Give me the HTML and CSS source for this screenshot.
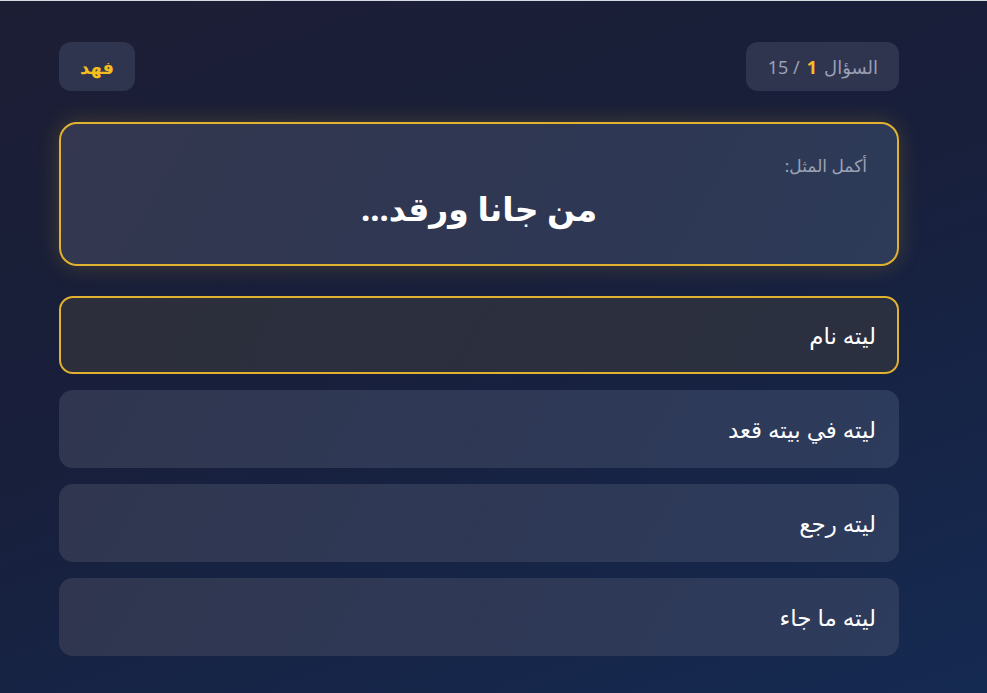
FILE: index.html
```html
<!DOCTYPE html>
<html lang="ar" dir="rtl">
<head>
<meta charset="utf-8">
<title>أكمل المثل</title>
<link rel="stylesheet" href="styles.css">
</head>
<body>
<div class="page">
  <header class="topbar">
    <div class="pill counter">السؤال <b class="num">1</b> / 15</div>
    <div class="pill player">فهد</div>
  </header>
  <section class="question">
    <div class="label">أكمل المثل:</div>
    <h1 class="title">من جانا ورقد...</h1>
  </section>
  <ul class="options">
    <li class="option selected">ليته نام</li>
    <li class="option">ليته في بيته قعد</li>
    <li class="option">ليته رجع</li>
    <li class="option">ليته ما جاء</li>
  </ul>
</div>
</body>
</html>
```

FILE: styles.css
```css
html, body {
  margin: 0;
  padding: 0;
  height: 100%;
}
body {
  font-family: "Noto Sans", "DejaVu Sans", sans-serif;
  background: linear-gradient(160deg, #1c1e34 0%, #181f3b 45%, #152a52 100%);
  border-top: 1px solid #d8dbe2;
  box-sizing: border-box;
  color: #fff;
}
.page {
  width: 840px;
  margin-right: 88px;
  padding-top: 41px;
  display: flex;
  flex-direction: column;
}
.topbar {
  display: flex;
  justify-content: space-between;
  align-items: center;
}
.pill {
  height: 49px;
  box-sizing: border-box;
  display: flex;
  align-items: center;
  border-radius: 12px;
  background: #30354f;
}
.counter {
  padding: 0 21px 0 22px;
  font-size: 18px;
  color: #9aa0b4;
  gap: 7px;
}
.counter .num {
  color: #f6bd1e;
  font-weight: 700;
}
.player {
  padding: 0 21px;
  font-size: 18px;
  font-weight: 700;
  color: #f6bd1e;
}
.question {
  margin-top: 31px;
  height: 144px;
  box-sizing: border-box;
  border: 2px solid #e1b22f;
  border-radius: 18px;
  background: linear-gradient(120deg, #34374f 0%, #2e3753 60%, #2d3b58 100%);
  box-shadow: 0 0 22px rgba(225, 178, 47, 0.22);
  padding: 32px 30px 0;
  display: flex;
  flex-direction: column;
}
.label {
  font-size: 17px;
  color: #9ca3b6;
  line-height: 20px;
}
.title {
  margin: 10px 0 0;
  text-align: center;
  font-size: 33px;
  font-weight: 700;
  line-height: 46px;
  color: #fff;
}
.options {
  list-style: none;
  margin: 30px 0 0;
  padding: 0;
  display: flex;
  flex-direction: column;
  gap: 16px;
}
.option {
  height: 78px;
  box-sizing: border-box;
  display: flex;
  align-items: center;
  padding: 0 23px;
  border-radius: 14px;
  background: linear-gradient(120deg, #30364f 0%, #2d3b5c 100%);
  font-size: 23px;
  color: #fff;
}
.option.selected {
  border: 2px solid #e1b22f;
  padding: 0 21px;
  background: linear-gradient(120deg, #2c2e3b 0%, #2b3040 100%);
}
```
